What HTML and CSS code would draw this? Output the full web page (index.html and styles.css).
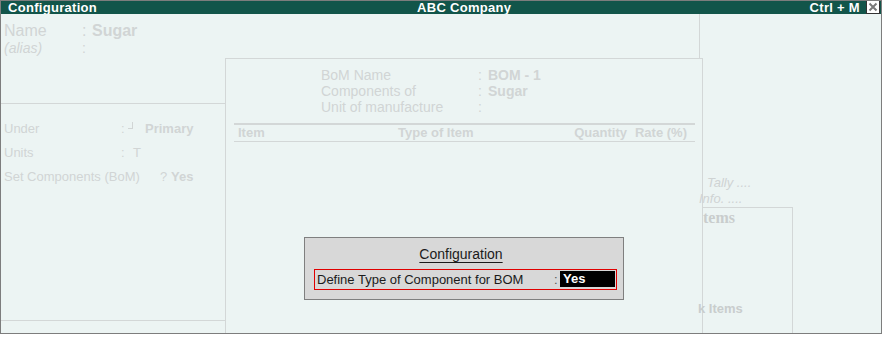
FILE: index.html
```html
<!DOCTYPE html>
<html lang="en">
<head>
    <meta charset="UTF-8">
    <title>Configuration</title>
    <link rel="stylesheet" href="styles.css">
</head>
<body>
    <div class="tallyWin">
        <div class="tallyWin_title">
            <span class="tallyWin_titleLeft">Configuration</span>
            <span class="tallyWin_company">ABC Company</span>
            <span class="tallyWin_keys">Ctrl + M</span>
            <span class="tallyWin_close">
                <svg width="10" height="10" viewBox="0 0 10 10"><path d="M1.5 1.5L8.5 8.5M8.5 1.5L1.5 8.5" stroke="#7a7a7a" stroke-width="2"/></svg>
            </span>
        </div>
        <div class="tallyWin_screen">
            <!-- stock item master (greyed behind) -->
            <div class="master">
                <div class="master_head">
                    <div class="master_name"><span class="master_nameLbl">Name</span><span class="master_colon">:</span><b>Sugar</b></div>
                    <div class="master_alias"><span class="master_nameLbl">(alias)</span><span class="master_colon">:</span></div>
                </div>
                <div class="master_body">
                    <div class="master_row"><span class="master_lbl">Under</span><span class="master_col">:</span><span class="master_mark"></span><b>Primary</b></div>
                    <div class="master_row"><span class="master_lbl">Units</span><span class="master_col">:</span><span>T</span></div>
                    <div class="master_row"><span class="master_lbl master_lblWide">Set Components (BoM)</span><span class="master_q">?</span><b>Yes</b></div>
                </div>
                <div class="master_foot"></div>
            </div>

            <!-- bill of materials -->
            <div class="bom">
                <div class="bom_top"></div>
                <div class="bom_panel">
                    <div class="bom_row"><span class="bom_lbl">BoM Name</span><span class="bom_colon">:</span><b>BOM - 1</b></div>
                    <div class="bom_row"><span class="bom_lbl">Components of</span><span class="bom_colon">:</span><b>Sugar</b></div>
                    <div class="bom_row"><span class="bom_lbl">Unit of manufacture</span><span class="bom_colon">:</span></div>
                    <div class="bom_head">
                        <span class="bom_item">Item</span>
                        <span class="bom_type">Type of Item</span>
                        <span>Quantity</span>
                        <span class="bom_rate">Rate (%)</span>
                    </div>
                </div>
            </div>

            <!-- right side panel -->
            <div class="side">
                <div class="side_tally">Tally ....</div>
                <div class="side_info">Info. ....</div>
                <div class="side_box">
                    <div class="side_boxTitle">tems</div>
                    <div class="side_stock">k Items</div>
                </div>
            </div>

            <!-- configuration popup -->
            <div class="config">
                <div class="config_title">Configuration</div>
                <div class="config_row">
                    <span class="config_lbl">Define Type of Component for BOM</span>
                    <span class="config_colon">:</span>
                    <span class="config_val">Yes</span>
                </div>
            </div>
        </div>
    </div>
</body>
</html>
```

FILE: styles.css
```css
body{
    margin: 0;
    font-family: "Liberation Sans", Arial, sans-serif;
    background: #ffffff;
}
.tallyWin{
    width: 880px;
    height: 332px;
    border: 1px solid #7d7d7d;
    display: flex;
    flex-direction: column;
}
.tallyWin_title{
    height: 13px;
    background: #12554a;
    color: #ffffff;
    font-size: 13px;
    font-weight: bold;
    line-height: 13px;
    display: flex;
    letter-spacing: 0.3px;
}
.tallyWin_titleLeft{
    padding-left: 7px;
    width: 409px;
}
.tallyWin_keys{
    margin-left: auto;
    margin-right: 6px;
}
.tallyWin_close{
    width: 12px;
    height: 12px;
    margin-right: 1px;
    background: #ffffff;
    border: 1px solid #333333;
    border-top: 0;
    display: flex;
    align-items: center;
    justify-content: center;
}
.tallyWin_screen{
    position: relative;
    flex: 1;
    background: #ecf4f3;
    display: grid;
    grid-template-columns: 224px 479px 1fr;
    color: #d1d5d5;
}

/* master */
.master{
    display: flex;
    flex-direction: column;
}
.master_head{
    height: 81px;
    padding-top: 8px;
    border-bottom: 1px solid #d3d7d7;
}
.master_name{
    display: flex;
    font-size: 16px;
    line-height: 18px;
    padding-left: 3px;
}
.master_alias{
    display: flex;
    font-size: 14px;
    line-height: 16px;
    font-style: italic;
    padding-left: 3px;
}
.master_nameLbl{width: 78px;}
.master_colon{width: 10px; font-style: normal;}
.master_body{
    padding-top: 13px;
    font-size: 13px;
    line-height: 24px;
}
.master_row{
    display: flex;
    padding-left: 3px;
}
.master_lbl{width: 117px;}
.master_lblWide{width: 156px;}
.master_col{width: 12px;}
.master_q{width: 11px;}
.master_mark{
    width: 4px;
    height: 6px;
    border-right: 1px solid #d1d5d5;
    border-bottom: 1px solid #d1d5d5;
    margin: 5px 12px 0 -5px;
}
.master_foot{
    margin-top: auto;
    height: 12px;
    border-top: 1px solid #d3d7d7;
}

/* bom */
.bom{
    display: flex;
    flex-direction: column;
}
.bom_top{
    height: 44px;
    width: 474px;
    border-right: 1px solid #d3d7d7;
}
.bom_panel{
    flex: 1;
    width: 476px;
    border: 1px solid #d3d7d7;
    border-bottom: 0;
    padding-top: 8px;
}
.bom_row{
    display: flex;
    font-size: 14px;
    line-height: 16px;
    padding-left: 95px;
}
.bom_lbl{width: 157px;}
.bom_colon{width: 10px;}
.bom_head{
    display: flex;
    margin: 8px 7px 0 8px;
    border-top: 2px solid #d3d7d7;
    border-bottom: 1px solid #d3d7d7;
    font-size: 13px;
    font-weight: bold;
    line-height: 16px;
    padding: 0 8px 0 4px;
}
.bom_item{width: 160px;}
.bom_type{flex: 1;}
.bom_rate{margin-left: 8px;}

/* side */
.side{
    margin-left: -6px;
    display: flex;
    flex-direction: column;
    padding-top: 161px;
    font-size: 13px;
    line-height: 16px;
    color: #cfd3d3;
}
.side_tally{
    font-style: italic;
    padding-left: 9px;
}
.side_info{
    font-style: italic;
    padding-left: 1px;
}
.side_box{
    flex: 1;
    margin-left: 4px;
    width: 90px;
    border-top: 1px solid #d3d7d7;
    border-right: 1px solid #d3d7d7;
    display: flex;
    flex-direction: column;
}
.side_boxTitle{
    font-family: "Liberation Serif", "Times New Roman", serif;
    font-weight: bold;
    font-size: 16px;
    line-height: 17px;
    padding-left: 1px;
    margin-top: 1px;
    color: #c9cdcd;
}
.side_stock{
    margin-top: auto;
    margin-bottom: 16px;
    margin-left: -4px;
    font-weight: bold;
    white-space: nowrap;
    color: #c9cdcd;
}

/* popup */
.config{
    position: absolute;
    left: 303px;
    top: 223px;
    width: 318px;
    height: 61px;
    background: #d8d8d8;
    border: 1px solid #7f7f7f;
    color: #1b1b1b;
}
.config_title{
    text-align: center;
    font-size: 14px;
    line-height: 16px;
    margin-top: 8px;
    padding-right: 6px;
    text-decoration: underline;
    text-underline-offset: 3px;
}
.config_row{
    display: flex;
    margin: 7px 0 0 9px;
    width: 301px;
    height: 19px;
    border: 1px solid #e00000;
    font-size: 13px;
    line-height: 19px;
}
.config_lbl{
    width: 237px;
    padding-left: 2px;
}
.config_colon{
    width: 6px;
    color: #555555;
}
.config_val{
    width: 52px;
    height: 16px;
    margin-top: 1px;
    padding-left: 3px;
    background: #000000;
    color: #ffffff;
    font-weight: bold;
    line-height: 16px;
}
```
